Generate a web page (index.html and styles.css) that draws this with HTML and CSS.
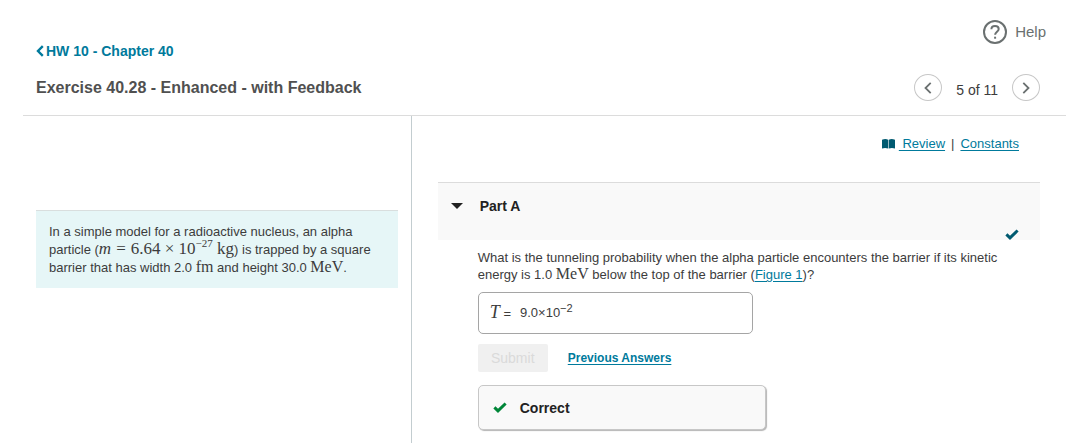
FILE: index.html
```html
<!DOCTYPE html>
<html lang="en">
<head>
<meta charset="utf-8">
<title>Exercise 40.28</title>
<meta name="viewport" content="width=device-width, initial-scale=1">
<link rel="stylesheet" href="styles.css">
</head>
<body>
<header class="header">
  <div class="header-titles">
    <a class="back-link" href="#"><svg class="back-icon" viewBox="0 0 8 12" aria-hidden="true"><path d="M6.800 1.200 2 6l4.800 4.800"/></svg>HW 10 - Chapter 40</a>
    <h1 class="title">Exercise 40.28 - Enhanced - with Feedback</h1>
  </div>
  <div class="header-tools">
    <a class="help" href="#"><svg class="help-icon" viewBox="0 0 24 24" aria-hidden="true"><circle cx="12" cy="12" r="11"/><path d="M8.400 9.300C8.400 7 10 5.900 12 5.900s3.700 1.200 3.700 3.100c0 2.600-3.600 2.900-3.600 5.800"/><path d="M12.100 16.700v2"/></svg>Help</a>
    <nav class="pager">
      <button class="pager-button" type="button" aria-label="Previous item"><svg class="pager-icon" viewBox="0 0 8 12" aria-hidden="true"><path d="M6.700.8 1.500 6l5.200 5.200"/></svg></button>
      <span class="pager-text">5 of 11</span>
      <button class="pager-button" type="button" aria-label="Next item"><svg class="pager-icon" viewBox="0 0 8 12" aria-hidden="true"><path d="M1.300.8 6.500 6l-5.200 5.200"/></svg></button>
    </nav>
  </div>
</header>
<main class="content">
  <aside class="intro">
    <p class="intro-box">In a simple model for a radioactive nucleus, an alpha particle (<span class="math formula"><i>m</i><span class="relation">=</span>6.64 × 10<sup>−27</sup> kg</span>) is trapped by a square barrier that has width 2.0 <span class="math">fm</span> and height 30.0 <span class="math">MeV</span>.</p>
  </aside>
  <section class="work">
    <div class="resources">
      <svg class="book-icon" viewBox="0 0 13 10" aria-hidden="true"><path d="M0 .8Q3.500-.6 6.200.8v8.800Q3.500 8.400 0 9.400zM6.800.8Q9.500-.6 13 .8v8.600q-3.500-1-6.200.2z"/></svg>
      <a class="link" href="#">&nbsp;Review</a>
      <span class="divider">|</span>
      <a class="link" href="#">Constants</a>
    </div>
    <div class="part-header">
      <svg class="caret" viewBox="0 0 12 6" aria-hidden="true"><path d="M0 0h12L6 6z"/></svg>
      <h2 class="part-title">Part A</h2>
      <svg class="check check-part" viewBox="0 0 14 11" aria-hidden="true"><path d="M1.400 5.300 5 8.800 12.600 1.500"/></svg>
    </div>
    <div class="part-body">
      <p class="question">What is the tunneling probability when the alpha particle encounters the barrier if its kinetic energy is 1.0 <span class="math">MeV</span> below the top of the barrier (<a class="link" href="#">Figure 1</a>)?</p>
      <div class="answer"><span class="answer-label"><i class="math variable">T</i> =</span><span class="answer-value">9.0×10<sup>−2</sup></span></div>
      <div class="actions">
        <button class="submit" type="button" disabled>Submit</button>
        <a class="link previous" href="#">Previous Answers</a>
      </div>
      <div class="feedback"><svg class="check check-correct" viewBox="0 0 14 11" aria-hidden="true"><path d="M1.400 5.300 5 8.800 12.600 1.500"/></svg>Correct</div>
    </div>
  </section>
</main>
</body>
</html>
```
FILE: styles.css
```css
* { box-sizing: border-box; }
body {
  margin: 0;
  padding: 0 10px 0 23px;
  background: #fff;
  color: #3c3c3c;
  font: 13px/16px "Liberation Sans", Arial, sans-serif;
}
h1, h2, p { margin: 0; }
svg { display: block; fill: none; }

.header {
  display: flex;
  justify-content: space-between;
  padding: 19px 20px 14px 13px;
  border-bottom: 1px solid #dcdcdc;
}
.header-titles { padding-top: 24px; }
.back-link {
  display: flex;
  align-items: center;
  gap: 2px;
  color: #007a9c;
  font-size: 14px;
  font-weight: bold;
  text-decoration: none;
}
.back-icon { width: 8px; height: 12px; stroke: #007a9c; stroke-width: 2.4; }
.title {
  margin-top: 19px;
  color: #505050;
  font-size: 16px;
  line-height: 20px;
}
.header-tools {
  display: flex;
  flex-direction: column;
  align-items: flex-end;
  gap: 29px;
}
.help {
  display: flex;
  align-items: center;
  gap: 8px;
  height: 26px;
  color: #6a7070;
  font-size: 15px;
  text-decoration: none;
}
.help-icon { width: 24px; height: 24px; stroke: #6a7070; stroke-width: 2; }
.pager { display: flex; align-items: center; gap: 14px; margin-right: 6px; }
.pager-button {
  display: grid;
  place-items: center;
  width: 28px;
  height: 27px;
  padding: 0;
  border: 1px solid #c7c7c7;
  border-radius: 50%;
  background: #fff;
}
.pager-icon { width: 8px; height: 12px; stroke: #6a7070; stroke-width: 1.8; }
.pager-text { padding-top: 4px; font-size: 14px; }

.content {
  display: grid;
  grid-template-columns: 41fr 69fr;
  min-height: calc(100vh - 116px);
}
.intro { padding: 94px 13px 0; border-right: 1px solid #c3cdd0; }
.intro-box {
  padding: 12px 13px 11px;
  border-top: 1px solid #d9dede;
  background: #e6f6f7;
  line-height: 18px;
}
.math {
  font-family: "Liberation Serif", "Times New Roman", serif;
  font-size: 16px;
  line-height: 16px;
}
.formula { font-size: 17px; }
.relation { margin: 0 5px; }
sup { font-size: 11px; line-height: 0; }

.work { padding: 20px 26px 0; }
.resources {
  display: flex;
  align-items: center;
  justify-content: flex-end;
  padding-right: 21px;
}
.link { color: #007a9c; text-decoration: underline; text-underline-offset: 2px; }
.divider { margin: 0 6px; }
.book-icon { width: 13px; height: 10px; margin-right: 4px; fill: #005a70; }
.part-header {
  display: flex;
  align-items: flex-start;
  height: 58px;
  margin-top: 30px;
  padding: 15px 21px 0 13px;
  border-top: 1px solid #dcdcdc;
  background: #f9f9f9;
}
.caret { width: 12px; height: 6px; margin-top: 5px; fill: #222; }
.part-title { margin-left: 17px; color: #222; font-size: 14px; line-height: 17px; }
.check { width: 14px; height: 11px; stroke-width: 3; }
.check-part { align-self: flex-end; margin-left: auto; stroke: #005a70; }
.check-correct { stroke: #008638; }
.part-body { padding: 10px 0 12px 40px; }
.answer {
  display: flex;
  align-items: center;
  gap: 9px;
  width: 275px;
  height: 42px;
  max-width: 100%;
  margin-top: 9px;
  padding: 0 11px;
  border: 1px solid #a5a5a5;
  border-radius: 5px;
}
.variable { font-size: 18px; }
.actions { display: flex; align-items: center; gap: 20px; margin-top: 10px; }
.submit {
  width: 70px;
  height: 28px;
  padding: 0;
  border: 0;
  border-radius: 2px;
  background: #f0f0f0;
  color: #dadada;
  font: 14px "Liberation Sans", Arial, sans-serif;
}
.previous { font-size: 12px; font-weight: bold; }
.feedback {
  display: flex;
  align-items: center;
  gap: 13px;
  width: 288px;
  height: 45px;
  max-width: 100%;
  margin-top: 13px;
  padding: 0 14px;
  border: 1px solid #c7c7c7;
  border-radius: 5px;
  background: #f9f9f9;
  box-shadow: 1px 1px 1px #b5b5b5;
  color: #222;
  font-size: 14px;
  font-weight: bold;
}
```
